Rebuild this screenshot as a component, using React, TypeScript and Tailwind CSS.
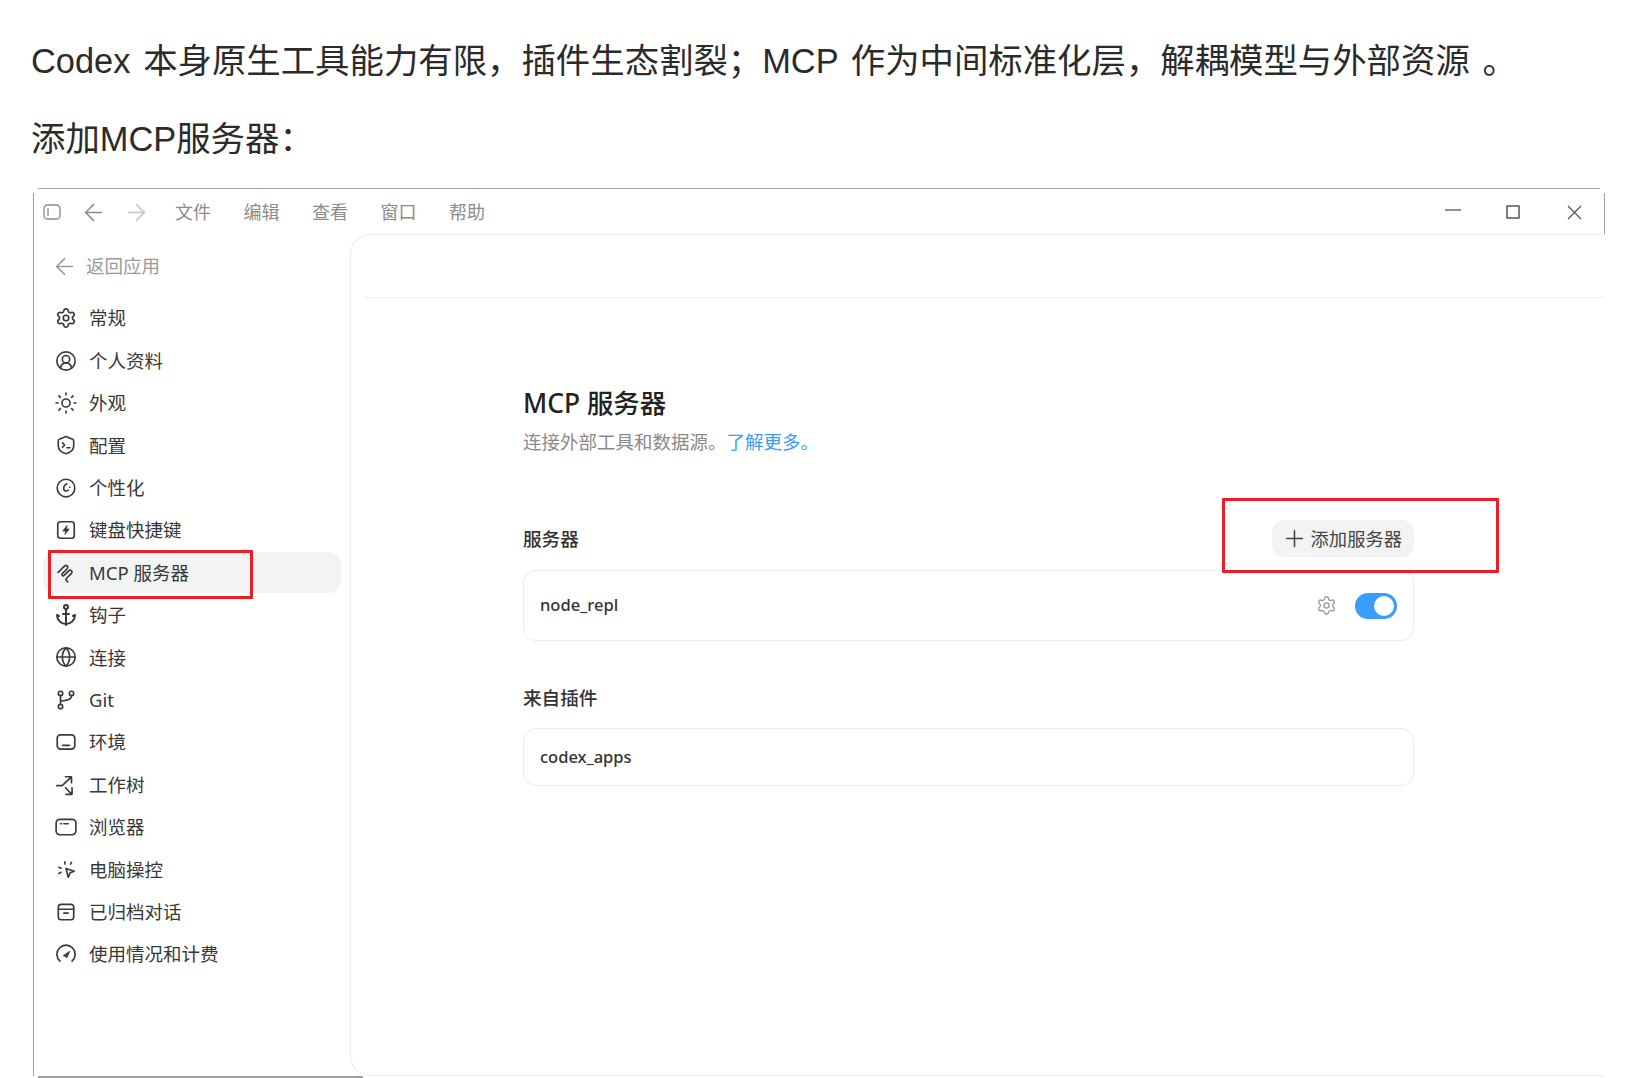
import React from "react";
import { Anchor, ArrowLeft, ArrowRight, CircleUserRound, Globe, Plus, Settings, Sun } from "lucide-react";

const Svg: React.FC<{ children: React.ReactNode; className?: string }> = ({ children, className = "w-[22px] h-[22px]" }) => (
  <svg viewBox="0 0 20 20" fill="none" stroke="currentColor" strokeWidth={1.5} strokeLinecap="round" strokeLinejoin="round" className={className}>
    {children}
  </svg>
);

const ShieldIcon = () => (
  <Svg>
    <path d="M10 2.3 16 4.8Q17 5.2 17 6.3V11Q17 16 10 18 3 16 3 11V6.3Q3 5.2 4 4.8Z" />
    <path d="M6.8 8 8.8 10 6.8 12M10.8 12.5H13.5" />
  </Svg>
);

const SwirlIcon = () => (
  <Svg>
    <circle cx="10" cy="10" r="8" />
    <path d="M10.8 6.2C9 7.2 7.6 9.4 8 11.2 8.4 12.8 10.6 13.2 12 12" />
    <path d="M13.4 9.2V9.4" />
  </Svg>
);

const BoltIcon = () => (
  <Svg>
    <rect x="2.5" y="2.5" width="15" height="15" rx="2.5" />
    <path d="M10.8 6 7 11H9.5L9.1 14.2 13 9H10.5Z" fill="currentColor" strokeWidth={0.6} />
  </Svg>
);

const McpIcon = () => (
  <Svg>
    <path d="M2.8 9.5 8.8 3.5A1.7 1.7 0 0 1 11.2 5.9L6.6 10.5A1.2 1.2 0 0 0 8.3 12.2L12.6 7.9A1.7 1.7 0 0 1 15 10.3L10.3 15A1.3 1.3 0 0 0 10.3 16.8L11.6 18" />
  </Svg>
);

const GitIcon = () => (
  <Svg>
    <circle cx="5" cy="4" r="2" />
    <circle cx="15" cy="4" r="2" />
    <circle cx="5" cy="16" r="2" />
    <path d="M5 6V14M15 6C15 9.5 12 10.5 5 11" />
  </Svg>
);

const EnvIcon = () => (
  <Svg>
    <rect x="2" y="3.5" width="16" height="13" rx="3" />
    <path d="M7 13H13" />
  </Svg>
);

const WorktreeIcon = () => (
  <Svg>
    <path d="M1.5 10.5H6.5L14.5 3M9.5 2.5H15V8" />
    <path d="M9.5 12.5 15 18M15.5 12.5V18.5H10" />
  </Svg>
);

const BrowserIcon = () => (
  <Svg>
    <rect x="1" y="3" width="18" height="14" rx="3.5" />
    <path d="M5 7H5.8M8 7H12" />
  </Svg>
);

const ComputerIcon = () => (
  <Svg>
    <path d="M10 9.5 17.5 12 13.8 13.5 12 17.5Z" />
    <path d="M9 3.5V5.5M15 4 14 5.5M3.5 8.5 5.5 9.3M3.5 14 5.5 13" />
  </Svg>
);

const ArchiveIcon = () => (
  <Svg>
    <rect x="3" y="3" width="14" height="14" rx="2.5" />
    <path d="M3 7.5H17M8 11H12" />
  </Svg>
);

const GaugeIcon = () => (
  <Svg>
    <path d="M4.5 16.5A8.3 8.3 0 1 1 15.5 16.5" />
    <path d="M7.8 11.3 13.5 7.5 11 13Z" fill="currentColor" strokeWidth={0.8} />
  </Svg>
);

const navItems: { label: string; icon: React.ReactNode; active?: boolean }[] = [
  { label: "常规", icon: <Settings className="w-[22px] h-[22px]" strokeWidth={1.8} /> },
  { label: "个人资料", icon: <CircleUserRound className="w-[22px] h-[22px]" strokeWidth={1.8} /> },
  { label: "外观", icon: <Sun className="w-[24px] h-[24px] -mx-px" strokeWidth={1.6} /> },
  { label: "配置", icon: <ShieldIcon /> },
  { label: "个性化", icon: <SwirlIcon /> },
  { label: "键盘快捷键", icon: <BoltIcon /> },
  { label: "MCP 服务器", icon: <McpIcon />, active: true },
  { label: "钩子", icon: <Anchor className="w-[24px] h-[24px] -mx-px" strokeWidth={2} /> },
  { label: "连接", icon: <Globe className="w-[22px] h-[22px]" strokeWidth={1.8} /> },
  { label: "Git", icon: <GitIcon /> },
  { label: "环境", icon: <EnvIcon /> },
  { label: "工作树", icon: <WorktreeIcon /> },
  { label: "浏览器", icon: <BrowserIcon /> },
  { label: "电脑操控", icon: <ComputerIcon /> },
  { label: "已归档对话", icon: <ArchiveIcon /> },
  { label: "使用情况和计费", icon: <GaugeIcon /> },
];

const menus = ["文件", "编辑", "查看", "窗口", "帮助"];

const TitleBar = () => (
  <div className="h-[41px] shrink-0 flex items-center justify-between pl-[9px] pr-[22px] pb-[3px] border-r border-[#a0a0a0] text-[#8b8b8b]">
    <div className="flex items-center">
      <svg viewBox="0 0 18 18" fill="none" stroke="currentColor" strokeWidth={1.3} className="w-[18px] h-[18px]">
        <rect x="1" y="2" width="16" height="14" rx="3.5" />
        <path d="M5 5V13" />
      </svg>
      <ArrowLeft className="w-[27px] h-[27px] ml-[19px] -mr-[4.5px]" strokeWidth={1.3} />
      <ArrowRight className="w-[27px] h-[27px] ml-[20.5px] -mr-[4.5px] text-[#c4c4c4]" strokeWidth={1.3} />
      <div className="flex gap-[32.5px] ml-[29.5px] text-[18px] leading-[26px]">
        {menus.map((m) => (
          <span key={m}>{m}</span>
        ))}
      </div>
    </div>
    <div className="flex items-center text-[#555555]">
      <svg viewBox="0 0 16 16" stroke="currentColor" strokeWidth={1.3} className="w-4 h-4 -mt-[4px]">
        <path d="M0 8H16" />
      </svg>
      <svg viewBox="0 0 14 14" fill="none" stroke="currentColor" strokeWidth={1.5} className="w-[14px] h-[14px] ml-[45px]">
        <rect x="1" y="1" width="12" height="12" />
      </svg>
      <svg viewBox="0 0 15 15" fill="none" stroke="currentColor" strokeWidth={1.2} className="w-[15px] h-[15px] ml-[47px]">
        <path d="M1 1 14 14M14 1 1 14" />
      </svg>
    </div>
  </div>
);

const Sidebar = () => (
  <aside className="w-[316px] shrink-0 pt-[19px] pl-[9px]">
    <div className="flex items-center h-[26px] pl-[13px] text-[18.5px] text-[#9a9a9a]">
      <ArrowLeft className="w-[27px] h-[27px] -ml-[5px] -mr-[4px]" strokeWidth={1.3} />
      <span className="ml-[12px]">返回应用</span>
    </div>
    <nav className="mt-[18.8px] flex flex-col gap-[1.4px]">
      {navItems.map((item) => (
        <div
          key={item.label}
          className={`relative flex items-center h-[41px] w-[298px] pl-[12px] gap-[12px] rounded-[12px] text-[18.5px] text-[#383838] ${
            item.active ? "bg-[#f2f3f3]" : ""
          }`}
        >
          <span className="text-[#3a3a3a]">{item.icon}</span>
          <span>{item.label}</span>
          {item.active && (
            <div className="absolute left-[5px] -top-[2px] w-[205px] h-[49px] border-[3px] border-[#ee1c25] rounded-[1px]" />
          )}
        </div>
      ))}
    </nav>
  </aside>
);

const Panel = () => (
  <main className="flex-1 min-w-0 border-l border-t border-b border-[#ededed] rounded-l-[20px]">
    <div className="h-[62px]" />
    <div className="h-px ml-[13px] bg-[#f0f0f0]" />
    <div className="pl-[172px] pt-[87px]">
      <h1 className="text-[26.4px] leading-[36px] font-medium text-[#222222]">MCP 服务器</h1>
      <p className="mt-[8px] text-[18.5px] leading-[26px] text-[#8a8a8a]">
        连接外部工具和数据源。<span className="text-[#3b9dfb]">了解更多。</span>
      </p>
      <div className="w-[891px] mt-[65px]">
        <div className="flex items-center justify-between">
          <h2 className="text-[18.6px] leading-[26px] font-medium text-[#333333]">服务器</h2>
          <div className="relative flex items-center h-[37px] pl-[12px] pr-[12px] gap-[6.5px] rounded-[12px] bg-[#f3f3f3] text-[18.3px] text-[#444444]">
            <Plus className="w-[27px] h-[27px] -mx-[3.5px]" strokeWidth={1.4} />
            <span>添加服务器</span>
            <div className="absolute -left-[50px] -top-[22px] w-[277px] h-[75px] border-[3px] border-[#ee1c25] rounded-[1px]" />
          </div>
        </div>
        <div className="mt-[13px] h-[71px] flex items-center justify-between pl-[16px] pr-[16px] border border-[#ececec] rounded-[13px]">
          <span className="text-[16.5px] font-medium text-[#333333]">node_repl</span>
          <div className="flex items-center gap-[18.5px]">
            <Settings className="w-[21px] h-[21px] text-[#999999]" strokeWidth={1.5} />
            <div className="flex items-center justify-end w-[42px] h-[26px] pr-[3px] rounded-full bg-[#3b9dfb]">
              <div className="w-[20px] h-[20px] rounded-full bg-white" />
            </div>
          </div>
        </div>
        <h2 className="mt-[44px] text-[18.6px] leading-[26px] font-medium text-[#333333]">来自插件</h2>
        <div className="mt-[17px] h-[58px] flex items-center pl-[16px] border border-[#ececec] rounded-[13px]">
          <span className="text-[16.5px] font-medium text-[#333333]">codex_apps</span>
        </div>
      </div>
    </div>
  </main>
);

export default function App() {
  return (
    <div className="w-[1638px] h-[1078px] flex flex-col overflow-hidden bg-white font-['Noto_Sans','Noto_Sans_CJK_SC',sans-serif]">
      <div className="pt-[39px] pl-[31px] text-[34.4px] leading-[44px] [word-spacing:3.2px] text-[#2b2b2b] font-['Liberation_Sans','Noto_Sans_CJK_SC',sans-serif] whitespace-nowrap">
        <p>Codex 本身原生工具能力有限，插件生态割裂；MCP 作为中间标准化层，解耦模型与外部资源 。</p>
        <p className="mt-[34px]">添加MCP服务器：</p>
      </div>
      <div className="mt-[27px] ml-[33px] w-[1572px] flex-1 min-h-0 flex flex-col">
        <div className="h-px shrink-0 ml-[5px] w-[1562px] bg-[#a0a0a0]" />
        <div className="mt-[4px] flex-1 min-h-0 flex flex-col border-l border-[#a0a0a0]">
          <TitleBar />
          <div className="flex-1 min-h-0 flex">
            <Sidebar />
            <Panel />
          </div>
        </div>
        <div className="h-[2px] shrink-0 ml-[5px] w-[325px] bg-[#a0a0a0]" />
      </div>
    </div>
  );
}
